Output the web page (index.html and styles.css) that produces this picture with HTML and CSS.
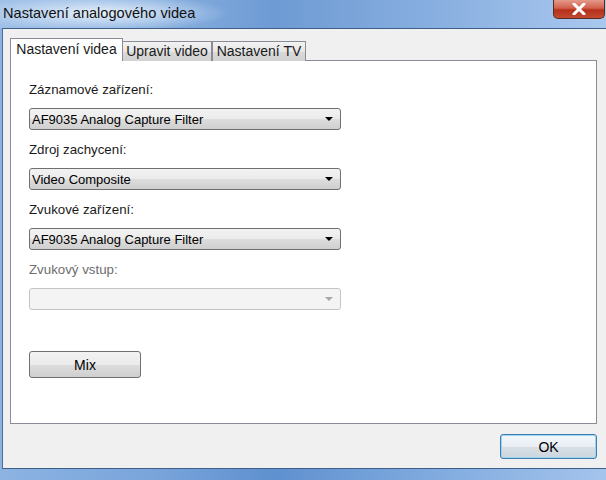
FILE: index.html
```html
<!DOCTYPE html>
<html lang="cs">
<head>
    <meta charset="UTF-8">
    <meta name="viewport" content="width=device-width, initial-scale=1.0">
    <title>Nastavení analogového videa</title>
    <link rel="stylesheet" href="styles.css">
</head>
<body>
    <div class="window">
        <div class="titlebar">
            <span class="title">Nastavení analogového videa</span>
            <div class="close-btn">
                <svg width="18" height="12" viewBox="0 0 18 12">
                    <path d="M4 1 L14 11 M14 1 L4 11" stroke="#fff" stroke-width="3" stroke-linecap="round"/>
                </svg>
            </div>
        </div>

        <div class="client">
            <div class="tabs">
                <div class="tab active">Nastavení videa</div>
                <div class="tab tab-edit">Upravit video</div>
                <div class="tab tab-tv">Nastavení TV</div>
            </div>

            <div class="panel">
                <div class="field">
                    <label>Záznamové zařízení:</label>
                    <div class="combo">
                        <span>AF9035 Analog Capture Filter</span>
                        <span class="arrow"></span>
                    </div>
                </div>
                <div class="field">
                    <label>Zdroj zachycení:</label>
                    <div class="combo">
                        <span>Video Composite</span>
                        <span class="arrow"></span>
                    </div>
                </div>
                <div class="field">
                    <label>Zvukové zařízení:</label>
                    <div class="combo">
                        <span>AF9035 Analog Capture Filter</span>
                        <span class="arrow"></span>
                    </div>
                </div>
                <div class="field disabled">
                    <label>Zvukový vstup:</label>
                    <div class="combo">
                        <span></span>
                        <span class="arrow"></span>
                    </div>
                </div>

                <button class="btn mix-btn">Mix</button>
            </div>

            <div class="footer">
                <button class="btn ok-btn">OK</button>
            </div>
        </div>
        <div class="bottom-frame"></div>
    </div>
</body>
</html>
```

FILE: styles.css
```css
* {
    box-sizing: border-box;
}

body {
    margin: 0;
    width: 606px;
    height: 480px;
    overflow: hidden;
    font-family: "Liberation Sans", Arial, sans-serif;
    font-size: 13px;
    color: #1a1a1a;
}

.window {
    width: 606px;
    height: 480px;
    display: flex;
    flex-direction: column;
    background: linear-gradient(90deg, #8cb3e2 0%, #7aa5db 25%, #5f90cf 45%, #7ea9de 70%, #a4c4ec 100%);
    padding-left: 2px;
}

/* title bar */
.titlebar {
    height: 28px;
    flex-shrink: 0;
    display: flex;
    justify-content: space-between;
    align-items: flex-start;
    margin-left: -2px;
    background:
        radial-gradient(ellipse 130px 18px at 100px 13px, rgba(235, 243, 252, 0.95), rgba(235, 243, 252, 0) 100%),
        linear-gradient(90deg, #9fc0e8 0%, #8ab1e0 25%, #6e9bd4 45%, #86addf 70%, #a9c8ee 100%);
}

.title {
    font-size: 14.6px;
    color: #111;
    padding: 5px 0 0 3px;
}

.close-btn {
    width: 52px;
    height: 19px;
    margin-right: 1px;
    border: 1px solid #5c2a24;
    border-top: none;
    border-radius: 0 0 5px 5px;
    background: linear-gradient(180deg, #e49a8c 0%, #d2604c 45%, #b5301c 55%, #c24a30 100%);
    display: flex;
    align-items: center;
    justify-content: center;
}

/* client area */
.client {
    flex: 1;
    background: #f0f0f0;
    border-top: 1px solid #3d5f88;
    border-left: 1px solid #4b6c95;
    border-bottom: 1px solid #3d5f88;
    padding: 9px 9px 0 7px;
    display: flex;
    flex-direction: column;
}

.tabs {
    display: flex;
    align-items: flex-end;
    height: 23px;
    margin-bottom: -1px;
    position: relative;
    z-index: 1;
}

.tab {
    height: 20px;
    border: 1px solid #898c95;
    border-bottom: none;
    border-left: none;
    background: linear-gradient(180deg, #f2f2f2 0%, #e6e6e6 50%, #d9d9d9 51%, #d2d2d2 100%);
    line-height: 19px;
    font-size: 14px;
    text-align: center;
}

.tab.active {
    width: 113px;
    height: 23px;
    border-left: 1px solid #898c95;
    background: #fff;
    line-height: 21px;
}

.tab-edit {
    width: 89px;
}

.tab-tv {
    width: 94px;
    border-left: 1px solid #898c95;
}

.panel {
    height: 364px;
    background: #fff;
    border: 1px solid #898c95;
    padding: 19px 18px 0 18px;
}

.field {
    margin-bottom: 10px;
}

.field label {
    display: block;
    height: 20px;
    line-height: 20px;
    margin-bottom: 8px;
    font-size: 13.3px;
    color: #1a1a1a;
}

.combo {
    width: 312px;
    height: 22px;
    border: 1px solid #707070;
    border-radius: 3px;
    background: linear-gradient(180deg, #f2f2f2 0%, #ebebeb 50%, #dddddd 51%, #cfcfcf 100%);
    display: flex;
    align-items: center;
    justify-content: space-between;
    padding: 0 6px 0 2px;
    color: #000;
}

.arrow {
    width: 0;
    height: 0;
    border-left: 4px solid transparent;
    border-right: 4px solid transparent;
    border-top: 4px solid #000;
    margin-right: 1px;
}

.field.disabled label {
    color: #6d6d6d;
}

.field.disabled .combo {
    border-color: #c5c5c5;
    background: #f4f4f4;
}

.field.disabled .arrow {
    border-top-color: #a8a8a8;
}

.btn {
    font-family: "Liberation Sans", Arial, sans-serif;
    font-size: 14px;
    color: #000;
    border: 1px solid #707070;
    border-radius: 3px;
    background: linear-gradient(180deg, #f2f2f2 0%, #ebebeb 50%, #dddddd 51%, #cfcfcf 100%);
    padding: 0;
}

.mix-btn {
    width: 112px;
    height: 27px;
    margin-top: 31px;
}

.footer {
    display: flex;
    justify-content: flex-end;
    padding-top: 10px;
}

.ok-btn {
    width: 97px;
    height: 25px;
    border-color: #3c7fb1;
    background: linear-gradient(180deg, #f4f8fb 0%, #e8eef3 50%, #d8e0e6 51%, #cdd6dd 100%);
    box-shadow: inset 0 0 0 1px #9fd3ee;
}

.bottom-frame {
    height: 11px;
    flex-shrink: 0;
    margin-left: -2px;
}
```
